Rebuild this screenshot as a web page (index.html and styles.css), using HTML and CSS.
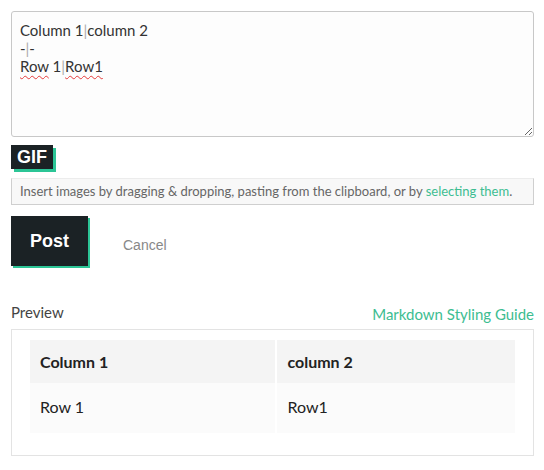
FILE: index.html
```html
<!DOCTYPE html>
<html lang="en">
 <head>
  <meta charset="utf-8"/>
  <title>Post an answer</title>
  <link rel="stylesheet" href="styles.css">
 </head>
 <body>
	<div id="editor">
		<div class="input" contenteditable="true" spellcheck="false">
			<div>Column 1<span class="pipe">|</span>column 2</div>
			<div>-<span class="pipe">|</span>-</div>
			<div><span class="typo">Row</span> 1<span class="pipe">|</span><span class="typo">Row1</span></div>
		</div>

		<button class="gif" type="button">GIF</button>

		<p class="upload">
			Insert images by dragging &amp; dropping, pasting from the clipboard, or by <a href="#none">selecting them</a>.
		</p>

		<div class="actions">
			<button class="post" type="button">Post</button>
			<a class="cancel" href="#none">Cancel</a>
		</div>
	</div>

	<section id="preview">
		<div class="preview-head">
			<h4>Preview</h4>
			<a href="#none">Markdown Styling Guide</a>
		</div>
		<div class="preview-box">
			<table>
				<thead>
					<tr><th>Column 1</th><th>column 2</th></tr>
				</thead>
				<tbody>
					<tr><td>Row 1</td><td>Row1</td></tr>
				</tbody>
			</table>
		</div>
	</section>
 </body>
</html>
```

FILE: styles.css
```css
*{margin:0; padding:0; box-sizing:border-box;}
body{ background:#fff; font-family:Lato, "Noto Sans", sans-serif; color:#333;}
a{ text-decoration:none; color:#3dbd91;}

/* 입력 영역 */
#editor{ margin:11px 10px 0 11px;}
	.input{ height:126px; border:1px solid #c8c8c8; border-radius:3px; padding:9px 8px;
		font-size:15px; line-height:18px; color:#333; background:#fdfdfd;
		resize:vertical; overflow:auto; outline:none;}
		.input .pipe{ color:#aaa;}
		.input .typo{ text-decoration:underline wavy #e53b3b; text-decoration-thickness:1px; text-underline-offset:3px;}

	.gif{ display:block; margin-top:8px; width:42px; height:24px; border:0; background:#1b2225; color:#fff;
		font:bold 18px "Liberation Sans", Arial, sans-serif; line-height:24px; box-shadow:3px 3px 0 #2cc596;}

	.upload{ margin-top:9px; height:27px; padding:0 8px; background:#f8f8f8;
		border:1px solid #cfcfcf; border-top-color:#ececec;
		font-size:13px; line-height:25px; color:#666;}

	.actions{ display:flex; align-items:center; margin-top:11px;}
		.post{ width:77px; height:50px; border:0; background:#1b2225; color:#fff;
			font:bold 18px "Liberation Sans", Arial, sans-serif; box-shadow:2px 2px 0 #2cc596;}
		.cancel{ margin-left:35px; padding-top:8px; font:14px "Liberation Sans", Arial, sans-serif; color:#888;}

/* 미리보기 */
#preview{ margin:37px 10px 0 11px;}
	.preview-head{ display:flex; justify-content:space-between; align-items:flex-end; height:26px;}
		.preview-head h4{ font-weight:normal; font-size:15px; color:#444; line-height:18px; padding-bottom:8px;}
		.preview-head a{ font-size:15px; line-height:18px; padding-bottom:6px;}

	.preview-box{ border:1px solid #e3e3e3; padding:10px 18px 22px;}
		table{ border-collapse:separate; border-spacing:2px 0; margin:0 -2px; width:calc(100% + 4px);}
		th, td{ text-align:left; padding:0 10px; font-size:16px; color:#222;}
		th{ height:43px; background:#f4f4f4; font-weight:bold;}
		td{ height:50px; padding-bottom:4px; background:#fbfbfb; font-weight:normal;}
```
